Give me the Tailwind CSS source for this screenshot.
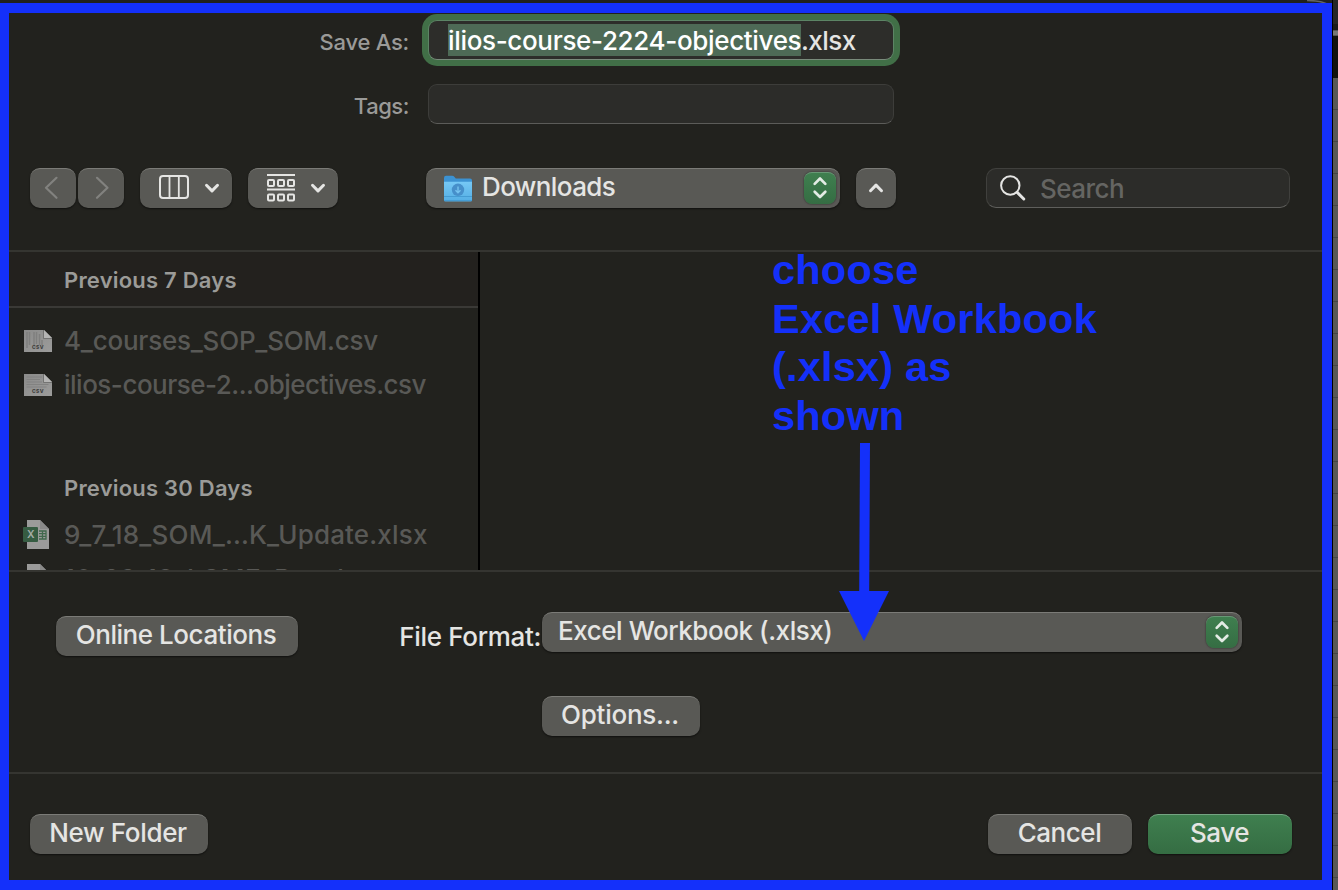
<!DOCTYPE html>
<html lang="en">
<head>
<meta charset="utf-8">
<title>Save As</title>
<script src="https://cdn.jsdelivr.net/npm/@tailwindcss/browser@4"></script>
</head>
<body class="relative flex h-[890px] w-[1338px] overflow-hidden bg-[#21211e] font-['Inter',sans-serif] text-[26px] leading-none font-[450] tracking-[-0.45px] whitespace-nowrap text-[#e5e5e3]">
<svg width="0" height="0" class="absolute">
  <defs>
    <linearGradient id="folder" x1="0" y1="0" x2="0" y2="1"><stop offset="0" stop-color="#76c8f5"/><stop offset="1" stop-color="#54aee4"/></linearGradient>
    <linearGradient id="doc" x1="0" y1="0" x2="1" y2="1"><stop offset="0" stop-color="#8b8b8a"/><stop offset="1" stop-color="#9c9c9b"/></linearGradient>
    <symbol id="updown" viewBox="0 0 32 32"><path d="M10.500 11.200 16 5.700l5.500 5.500M10.500 19.300 16 24.800l5.500-5.500" fill="none" stroke="#e3ebe4" stroke-width="2.800" stroke-linecap="round" stroke-linejoin="round"/></symbol>
    <symbol id="down" viewBox="0 0 16 12"><path d="M2.500 3.300 8 8.900l5.500-5.600" fill="none" stroke="#e5e5e3" stroke-width="3" stroke-linecap="round" stroke-linejoin="round"/></symbol>
  </defs>
</svg>

<div class="flex w-[1332px] flex-col pt-[3px]">
  <main class="flex h-[887px] flex-col border-[10px] border-l-[9px] border-[#1430fa] bg-[#22221e]">
    <!-- File name and tags -->
    <section class="flex h-[155px] flex-col gap-6 pt-[7px]">
      <div class="flex h-10">
        <div class="flex w-[419px] items-center justify-end pr-[19px] pt-[4px] text-[22px] font-medium tracking-[-0.25px] text-[#9a9a98]"><span>Save As:</span></div>
        <div class="flex w-[466px] items-center rounded-[9px] border border-[#5c8465] border-b-[#798a7b] bg-[#2d2d2a] pb-[1px] pl-[19px] shadow-[0_0_0_6px_#416f47]">
          <span class="flex h-8 w-[353px] items-center bg-[#4e6a56] pt-[3px] text-[26px] font-medium tracking-[-0.34px] text-white"><span>ilios-course-2224-objectives</span></span><span class="pt-[3px] tracking-[-0.55px]">.xlsx</span>
        </div>
      </div>
      <div class="flex h-10">
        <div class="flex w-[419px] items-center justify-end pr-[19px] pt-[4px] text-[22px] font-medium tracking-[-0.45px] text-[#9a9a98]"><span>Tags:</span></div>
        <div class="w-[466px] rounded-[9px] border border-[#3d3d3a] border-b-[#5c5c59] bg-[#2c2c29]"></div>
      </div>
    </section>

    <!-- Toolbar -->
    <section class="flex h-[82px] pl-[21px]">
      <div class="flex h-10 gap-[2px]">
        <div class="flex w-[46px] items-center justify-center rounded-[10px] border-t border-[#7b7b77] bg-[#595955] shadow-[0_1px_2px_#0008]"><svg width="46" height="38" viewBox="0 0 46 38" fill="none" stroke="#82827f" stroke-width="2.200" stroke-linecap="round" stroke-linejoin="round"><path d="M26.500 7.800 16 17.800l10.500 10"/></svg></div>
        <div class="flex w-[46px] items-center justify-center rounded-[10px] border-t border-[#7b7b77] bg-[#595955] shadow-[0_1px_2px_#0008]"><svg width="46" height="38" viewBox="0 0 46 38" fill="none" stroke="#82827f" stroke-width="2.200" stroke-linecap="round" stroke-linejoin="round"><path d="M19 7.800l10.500 10-10.500 10"/></svg></div>
      </div>
      <div class="ml-4 flex h-10 w-[92px] items-start rounded-[10px] border-t border-[#7b7b77] bg-[#595955] pl-[19px] pt-[6px] shadow-[0_1px_2px_#0008]">
        <svg width="30" height="24" viewBox="0 0 30 24" fill="none" stroke="#e5e5e3"><rect x="1" y="1" width="28" height="22" rx="3" stroke-width="2"/><path d="M10.500 2v20M19.800 2v20" stroke-width="1.800"/></svg>
        <svg width="16" height="12" class="ml-[15px] mt-[7px]"><use href="#down"/></svg>
      </div>
      <div class="ml-4 flex h-10 w-[90px] items-start rounded-[10px] border-t border-[#7b7b77] bg-[#595955] pl-[19px] pt-[5px] shadow-[0_1px_2px_#0008]">
        <svg width="28" height="28" viewBox="0 0 28 28" fill="none" stroke="#e5e5e3" stroke-width="2"><path d="M0 1h28M0 15.500h28"/><rect x="1" y="6" width="6" height="6" rx="1"/><rect x="11" y="6" width="6" height="6" rx="1"/><rect x="21" y="6" width="6" height="6" rx="1"/><rect x="1" y="20.500" width="6" height="6" rx="1"/><rect x="11" y="20.500" width="6" height="6" rx="1"/><rect x="21" y="20.500" width="6" height="6" rx="1"/></svg>
        <svg width="16" height="12" class="ml-[15px] mt-[8px]"><use href="#down"/></svg>
      </div>
      <div class="ml-[88px] flex h-10 w-[414px] items-center rounded-[10px] border-t border-[#7b7b77] bg-[#595955] pl-[17px] pr-1 shadow-[0_1px_2px_#0008]">
        <svg width="30" height="28" viewBox="0 0 30 28"><path d="M1 3Q1 .8 3 .8H9q1.500 0 2.500 1.300l1.300 1.400H27q2 0 2 2V24H1z" fill="#3c92d2"/><path d="M1 6.800h28V25q0 1.500-1.500 1.500H2.500Q1 26.500 1 25z" fill="url(#folder)"/><path d="M1 21.500h28M1 25.500h28" stroke="#459cd3" stroke-width="1"/><circle cx="15" cy="14.800" r="6.200" fill="#468fca"/><path d="M15 11.500v6m-2.500-2.300 2.500 2.500 2.500-2.500" fill="none" stroke="#75c2ef" stroke-width="1.400"/></svg>
        <span class="ml-[9px] pb-[4px] tracking-[-0.6px]">Downloads</span>
        <div class="mb-[2px] ml-auto h-8 w-8 rounded-[8px] border-t border-[#679875] bg-linear-to-b from-[#3f7f4f] to-[#356d43] shadow-[0_0_2px_#0009]"><svg width="32" height="31"><use href="#updown"/></svg></div>
      </div>
      <div class="ml-4 flex h-10 w-10 items-center justify-center rounded-[10px] border-t border-[#7b7b77] bg-[#595955] pb-[2px] shadow-[0_1px_2px_#0008]"><svg width="16" height="12" class="rotate-180"><use href="#down"/></svg></div>
      <div class="ml-[90px] flex h-10 w-[304px] items-center rounded-[10px] border border-[#40403d] border-b-[#5f5f5c] bg-[#2c2c29] pl-[13px]">
        <svg width="26" height="26" viewBox="0 0 26 26" fill="none" stroke="#e5e5e3" stroke-linecap="round"><circle cx="10.300" cy="10.500" r="9.200" stroke-width="2"/><path d="m17.200 17.400 6.600 6.600" stroke-width="2.900"/></svg>
        <span class="ml-[14px] pt-[1px] tracking-[-0.55px] text-[#656562]">Search</span>
      </div>
    </section>

    <!-- File browser -->
    <section class="flex h-[322px] border-y-2 border-[#353531]">
      <div class="flex w-[471px] flex-col overflow-hidden border-r-2 border-black">
        <div class="flex h-14 shrink-0 items-center border-b-2 border-[#3a3936] bg-[#23211e] pl-[55px] pt-[2px] text-[22px] font-semibold tracking-[0.21px] text-[#9b9b98]"><span>Previous 7 Days</span></div>
        <div class="mt-[11px] flex h-11 shrink-0 items-center pl-[15px] text-[#595956]">
          <svg width="28" height="22" viewBox="0 0 28 22"><path d="M0 0h20l8 8v14H0z" fill="url(#doc)"/><path d="M20 0v8h8z" fill="#b5b5b4"/><path d="M19.500 0v8.500H28" fill="none" stroke="#656564" stroke-width=".7"/><path d="M3 2v16M5.500 2v13M10 2v13M12.500 2v12M15.500 4v11M18 10v5" stroke="#7f7f7e" stroke-width="1.500"/><text x="14" y="19.200" text-anchor="middle" font-family="Inter" font-weight="800" font-size="5" letter-spacing=".4" fill="#3d3d3c">CSV</text></svg>
          <span class="ml-3 tracking-[-0.22px]">4_courses_SOP_SOM.csv</span>
        </div>
        <div class="flex h-11 shrink-0 items-center pl-[15px] text-[#595956]">
          <svg width="28" height="22" viewBox="0 0 28 22"><path d="M0 0h20l8 8v14H0z" fill="url(#doc)"/><path d="M20 0v8h8z" fill="#b5b5b4"/><path d="M19.500 0v8.500H28" fill="none" stroke="#656564" stroke-width=".7"/><path d="M2.500 3H18M2.500 5.500H16M2.500 8H18M2.500 10.500h22M2.500 13h20" stroke="#828281" stroke-width="1.200"/><text x="14" y="19.200" text-anchor="middle" font-family="Inter" font-weight="800" font-size="5" letter-spacing=".4" fill="#3d3d3c">CSV</text></svg>
          <span class="ml-3 tracking-[-0.5px]">ilios-course-2...objectives.csv</span>
        </div>
        <div class="mt-[52px] flex h-14 shrink-0 items-center pl-[55px] pt-[2px] text-[22px] font-semibold tracking-[0.21px] text-[#9b9b98]"><span>Previous 30 Days</span></div>
        <div class="mt-[-3px] flex h-11 shrink-0 items-center pl-[14px] text-[#595956]">
          <svg width="26" height="29" viewBox="0 0 26 29"><path d="M4 0h13l9 9v20H4z" fill="#9b9b9a"/><path d="M17 0l9 9h-9z" fill="#8a8a89"/><path d="M16 11h7v8h-7M16 13.700h7M16 16.300h7M19.500 11v8" fill="none" stroke="#41694d" stroke-width="1.300"/><rect y="7" width="15" height="15" rx="1" fill="#365c42"/><text x="7.500" y="18.200" text-anchor="middle" font-family="Inter" font-weight="600" font-size="10.500" fill="#a5ada7">X</text></svg>
          <span class="ml-[15px] pt-[2px] tracking-[0.17px]">9_7_18_SOM_...K_Update.xlsx</span>
        </div>
        <div class="flex h-11 shrink-0 items-center pl-[14px] text-[#595956]">
          <svg width="26" height="29" viewBox="0 0 26 29"><path d="M4 0h13l9 9v20H4z" fill="#9b9b9a"/><path d="M17 0l9 9h-9z" fill="#8a8a89"/></svg>
          <span class="ml-[15px] pt-[2px] tracking-[0.34px]">10_23_18_LCME_Reacl</span>
        </div>
      </div>
    </section>

    <!-- Format options -->
    <section class="flex h-[200px]">
      <div class="pl-[47px] pt-[44px]"><div class="flex h-10 w-[242px] items-center justify-center rounded-[10px] border-t border-[#7b7b77] bg-[#595955] pb-[4px] pr-[2px] shadow-[0_1px_2px_#0008]"><span>Online Locations</span></div></div>
      <div class="flex w-[244px] justify-end pr-[1px] pt-[52px]"><span class="tracking-[-0.33px]">File Format:</span></div>
      <div class="flex flex-col gap-11 pt-10">
        <div class="flex h-10 w-[700px] items-center rounded-[10px] border-t border-[#7b7b77] bg-[#595955] pl-4 pr-1 shadow-[0_1px_2px_#0008]">
          <span class="pb-[3px]">Excel Workbook (.xlsx)</span>
          <div class="mb-[2px] ml-auto h-8 w-8 rounded-[8px] border-t border-[#679875] bg-linear-to-b from-[#3f7f4f] to-[#356d43] shadow-[0_0_2px_#0009]"><svg width="32" height="31"><use href="#updown"/></svg></div>
        </div>
        <div class="flex h-10 w-[158px] items-center justify-center rounded-[10px] border-t border-[#7b7b77] bg-[#595955] pb-[4px] pr-[2px] shadow-[0_1px_2px_#0008]"><span class="tracking-[-0.25px]">Options...</span></div>
      </div>
    </section>

    <!-- Footer -->
    <footer class="flex grow border-t-2 border-[#353531] pl-[21px] pr-[30px] pt-10">
      <div class="flex h-10 w-[178px] items-center justify-center rounded-[10px] border-t border-[#7b7b77] bg-[#595955] pb-[4px] pr-[2px] shadow-[0_1px_2px_#0008]"><span class="tracking-[-0.34px]">New Folder</span></div>
      <div class="ml-auto flex h-10 w-[144px] items-center justify-center rounded-[10px] border-t border-[#7b7b77] bg-[#595955] pb-[4px] pr-px shadow-[0_1px_2px_#0008]"><span>Cancel</span></div>
      <div class="ml-4 flex h-10 w-[144px] items-center justify-center rounded-[10px] border-t border-[#75a482] bg-linear-to-b from-[#3f7f4f] to-[#356d43] pb-[4px] pr-[1px] shadow-[0_1px_2px_#0008]"><span>Save</span></div>
    </footer>
  </main>
</div>

<!-- Edge of the spreadsheet window behind the dialog -->
<div class="flex w-[6px] flex-col border-l border-black bg-[#20201f]">
  <div class="h-[24px] bg-[#262626]"></div>
  <div class="h-[6px] bg-[#1b1b1a]"></div>
  <div class="h-[6px] border-y border-[#555] bg-[#777]"></div>
  <div class="h-[42px] bg-[#11110e]"></div>
  <div class="grow bg-[repeating-linear-gradient(to_bottom,#585856_0px,#585856_31px,#464644_31px,#464644_32px)]"></div>
</div>
<svg class="absolute left-[1304px] top-0" width="34" height="3" fill="none"><path d="M3 .5q14 0 21 4" stroke="#656563" stroke-width="1.500"/></svg>

<!-- Annotation -->
<div class="absolute left-[772px] top-[246px] font-['Liberation_Sans',sans-serif] text-[41.500px] leading-[48.700px] font-bold tracking-[0.200px] text-[#1430fa]">choose<br>Excel Workbook<br>(.xlsx) as<br>shown</div>
<svg class="absolute left-[839px] top-[443px]" width="50" height="198" viewBox="0 0 50 198" fill="#1430fa"><path d="M21 0h10l-.8 148H50L25 198 0 148h20.200z"/></svg>
</body>
</html>
